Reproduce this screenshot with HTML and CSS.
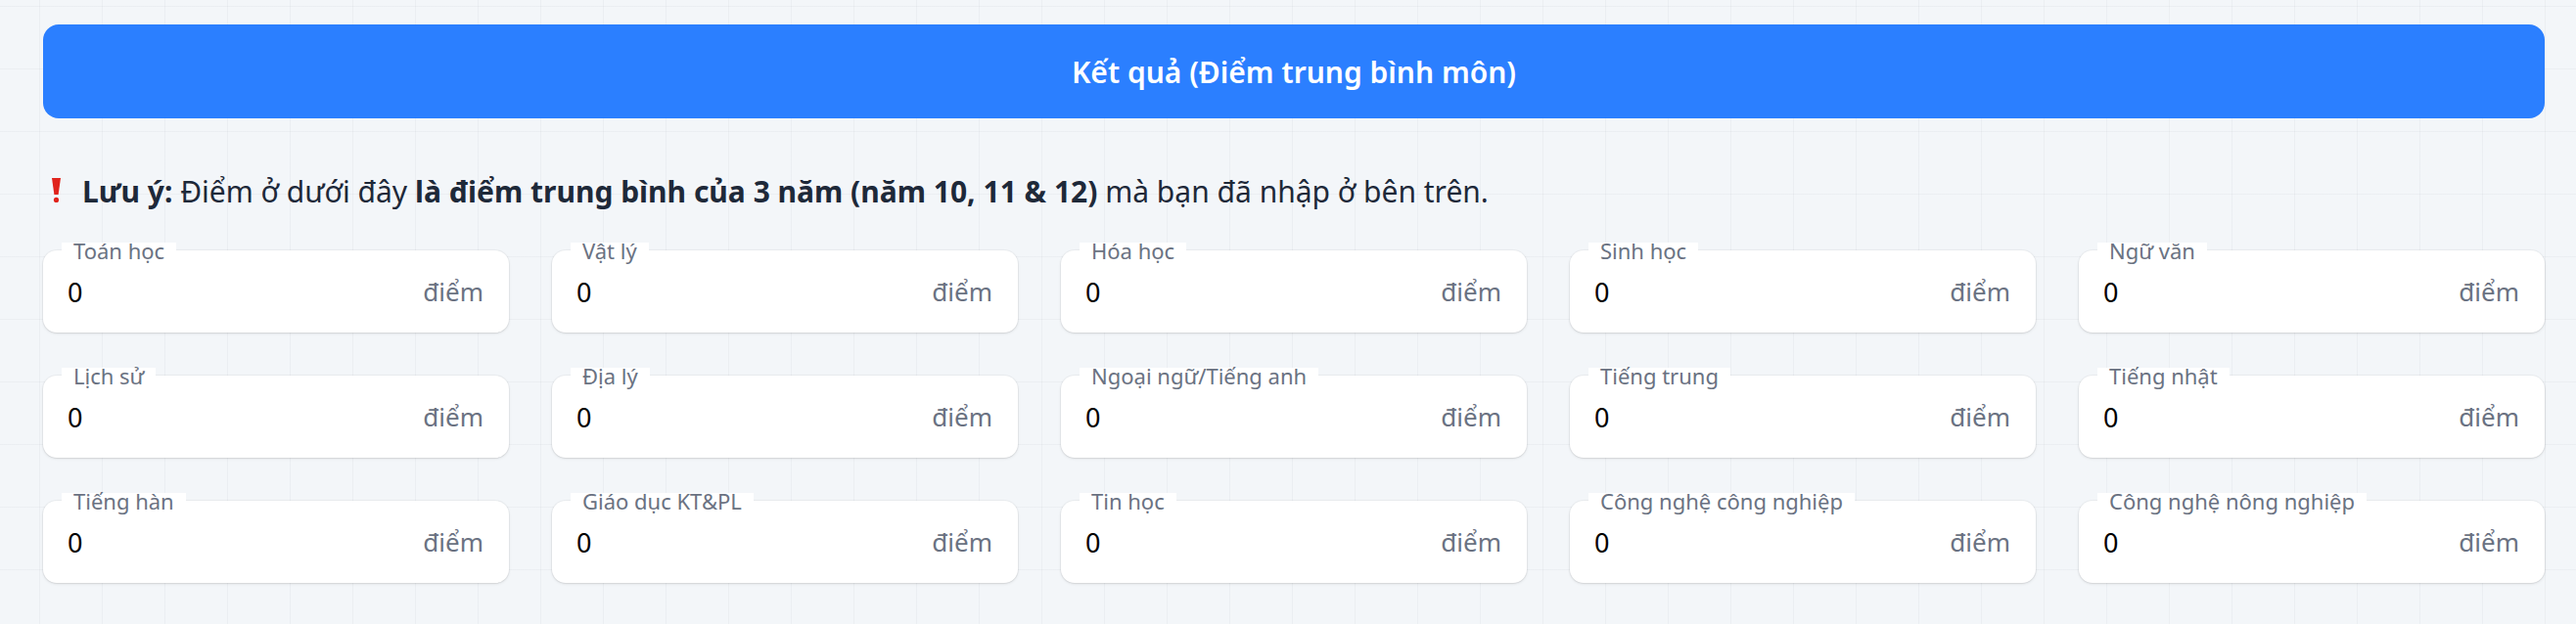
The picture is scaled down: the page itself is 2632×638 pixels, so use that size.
FILE: index.html
```html
<html>
    <head>
        <meta charset="utf-8">
        <title>Kết quả</title>
        <link rel="stylesheet" href="styles.css">
    </head>
    <body>
        <div class="page">
            <div class="banner">Kết quả (Điểm trung bình môn)</div>

            <p class="note"><svg class="mark" width="9" height="25" viewBox="0 0 9 25"><path d="M0 0H9L6.6 17H2.4Z" fill="#e0241d"/><circle cx="4.5" cy="22.4" r="2.6" fill="#e0241d"/></svg><b>Lưu ý:</b> Điểm ở dưới đây <b>là điểm trung bình của 3 năm (năm 10, 11 &amp; 12)</b> mà bạn đã nhập ở bên trên.</p>

            <div class="grid">
                <div class="field"><span class="label">Toán học</span><span class="value">0</span><span class="unit">điểm</span></div>
                <div class="field"><span class="label">Vật lý</span><span class="value">0</span><span class="unit">điểm</span></div>
                <div class="field"><span class="label">Hóa học</span><span class="value">0</span><span class="unit">điểm</span></div>
                <div class="field"><span class="label">Sinh học</span><span class="value">0</span><span class="unit">điểm</span></div>
                <div class="field"><span class="label">Ngữ văn</span><span class="value">0</span><span class="unit">điểm</span></div>

                <div class="field"><span class="label">Lịch sử</span><span class="value">0</span><span class="unit">điểm</span></div>
                <div class="field"><span class="label">Địa lý</span><span class="value">0</span><span class="unit">điểm</span></div>
                <div class="field"><span class="label">Ngoại ngữ/Tiếng anh</span><span class="value">0</span><span class="unit">điểm</span></div>
                <div class="field"><span class="label">Tiếng trung</span><span class="value">0</span><span class="unit">điểm</span></div>
                <div class="field"><span class="label">Tiếng nhật</span><span class="value">0</span><span class="unit">điểm</span></div>

                <div class="field"><span class="label">Tiếng hàn</span><span class="value">0</span><span class="unit">điểm</span></div>
                <div class="field"><span class="label">Giáo dục KT&amp;PL</span><span class="value">0</span><span class="unit">điểm</span></div>
                <div class="field"><span class="label">Tin học</span><span class="value">0</span><span class="unit">điểm</span></div>
                <div class="field"><span class="label">Công nghệ công nghiệp</span><span class="value">0</span><span class="unit">điểm</span></div>
                <div class="field"><span class="label">Công nghệ nông nghiệp</span><span class="value">0</span><span class="unit">điểm</span></div>
            </div>
        </div>
    </body>
</html>
```

FILE: styles.css
```css
*{
    margin:0;
    padding:0;
    box-sizing:border-box;
}
body{
    font-family:"Noto Sans", Roboto, sans-serif;
    background-color:#f3f6f9;
    background-image:
        linear-gradient(to right, rgba(30,41,59,.035) 1px, transparent 1px),
        linear-gradient(to bottom, rgba(30,41,59,.035) 1px, transparent 1px);
    background-size:64px 64px;
    background-position:40px 6px;
    height:638px;
    overflow:hidden;
}
.page{
    padding:25px 32px 0 44px;
}
.banner{
    height:96px;
    border-radius:16px;
    background:#2b7fff;
    color:#fff;
    font-size:30px;
    font-weight:600;
    display:flex;
    align-items:center;
    justify-content:center;
}
.note{
    margin-top:55px;
    font-size:30px;
    line-height:40px;
    color:#1e2939;
    white-space:nowrap;
}
.note b{
    font-weight:700;
}
.mark{
    margin:0 22px 0 9px;
    vertical-align:baseline;
}
.grid{
    margin-top:40px;
    display:grid;
    grid-template-columns:repeat(5, 1fr);
    column-gap:44px;
    row-gap:44px;
}
.field{
    position:relative;
    height:84px;
    background:#fff;
    border-radius:14px;
    box-shadow:0 0 0 1px rgba(0,0,0,.03), 0 1px 3px rgba(0,0,0,.1), 0 1px 2px -1px rgba(0,0,0,.1);
    display:flex;
    align-items:center;
    justify-content:space-between;
    padding:0 26px 0 25px;
}
.label{
    position:absolute;
    top:-8px;
    left:19px;
    padding:0 12px;
    background:#fff;
    font-size:22px;
    line-height:16px;
    color:#6a7282;
}
.value{
    font-size:27px;
    color:#000;
}
.unit{
    font-size:26px;
    color:#6a7282;
}
```
